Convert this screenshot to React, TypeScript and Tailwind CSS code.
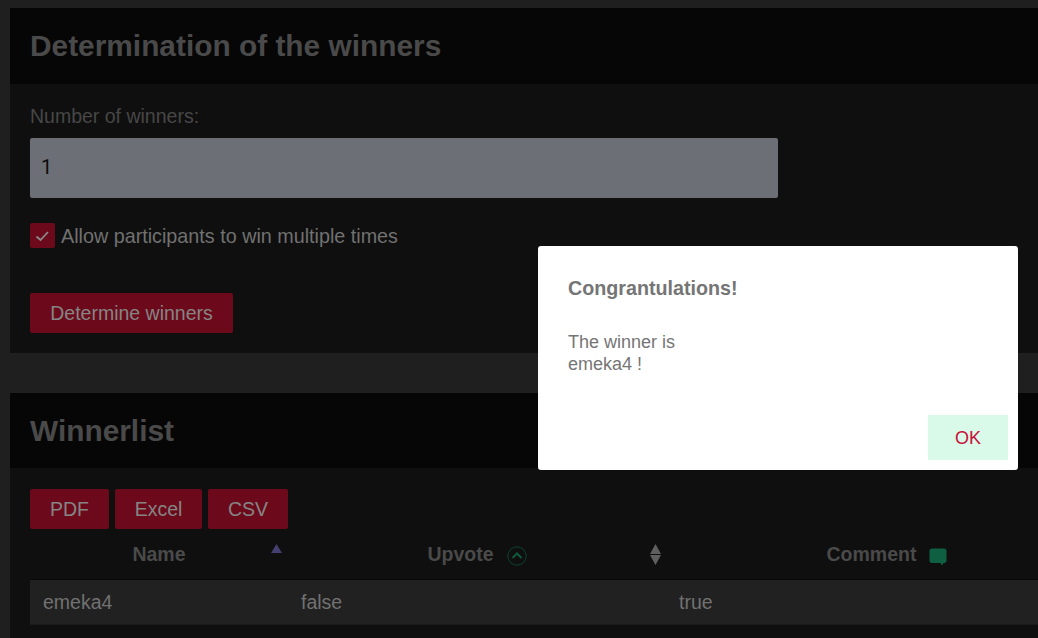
import React from "react";

function SectionHeader({ title, className }: { title: string; className: string }) {
  return (
    <div className={`bg-[#060606] pl-5 flex items-center ${className}`}>
      <h2 className="text-[29.85px] font-bold text-[#4a4a4a] leading-none">{title}</h2>
    </div>
  );
}

function RedButton({ label, className }: { label: string; className: string }) {
  return (
    <button className={`h-10 pt-[1px] bg-[#6c0a1b] text-[#858585] text-[19.5px] rounded-[2px] ${className}`}>
      {label}
    </button>
  );
}

export default function App() {
  return (
    <div
      className="relative w-[1038px] h-[638px] overflow-hidden bg-[#1f1f1f] pl-2.5 pt-2"
      style={{ fontFamily: '"Liberation Sans", Arial, sans-serif' }}
    >
      <section className="w-[1100px]">
        <SectionHeader title="Determination of the winners" className="h-[76px]" />
        <div className="h-[269px] bg-[#0f0f0f] px-5 pt-[19px]">
          <label className="block text-[19.5px] leading-[27px] text-[#474747]">Number of winners:</label>
          <div className="mt-[8px] w-[748px] h-[60px] bg-[#6c6f76] rounded-[2px] flex items-center pl-[11px] pb-[3px] text-[20px] text-[#0c0c0c] font-['Roboto']">
            1
          </div>
          <div className="mt-[25px] h-[25px] flex items-center gap-[6px]">
            <span className="w-[25px] h-[25px] bg-[#6c0a1b] rounded-[2px] flex items-center justify-center">
              <svg width="15" height="12" viewBox="0 0 15 12" fill="none">
                <path d="M1.5 6.5 L5.5 10 L13 2" stroke="#8a8a8a" strokeWidth="1.8" />
              </svg>
            </span>
            <span className="text-[19.75px] leading-[25px] pt-[2px] text-[#717171]">Allow participants to win multiple times</span>
          </div>
          <RedButton label="Determine winners" className="mt-[45px] w-[203px]" />
        </div>
      </section>

      <section className="w-[1100px] mt-10">
        <SectionHeader title="Winnerlist" className="h-[75px]" />
        <div className="h-[200px] bg-[#0f0f0f] px-5 pt-[21px]">
          <div className="flex gap-[6px]">
            <RedButton label="PDF" className="w-[79px]" />
            <RedButton label="Excel" className="w-[87px]" />
            <RedButton label="CSV" className="w-[80px]" />
          </div>
          <div className="w-[1076px]">
            <div className="grid grid-cols-[258px_378px_440px] h-[51px] border-b border-[#080808] text-[19.5px] font-bold text-[#4a4a4a]">
              <div className="relative flex items-center justify-center pt-[1px]">
                Name
                <svg className="absolute right-[6px] top-[15px]" width="11" height="9" viewBox="0 0 11 9">
                  <path d="M5.5 0 L11 9 L0 9 Z" fill="#453f72" />
                </svg>
              </div>
              <div className="relative flex items-center justify-center gap-[13px] pt-[1px]">
                Upvote
                <svg width="20" height="20" viewBox="0 0 20 20" fill="none" className="mt-[3px]">
                  <circle cx="10" cy="10" r="9.2" stroke="#0c4532" strokeWidth="1" />
                  <path d="M5.5 12 L10 7.5 L14.5 12" stroke="#0f5a3f" strokeWidth="2" />
                </svg>
                <svg className="absolute right-[5px] top-[15px]" width="11" height="21" viewBox="0 0 11 21">
                  <path d="M5.5 0 L11 10 L0 10 Z M5.5 21 L11 11 L0 11 Z" fill="#5f5f5f" />
                </svg>
              </div>
              <div className="flex items-center justify-center gap-[13px] pl-[2px] pt-[1px]">
                Comment
                <svg width="18" height="18" viewBox="0 0 18 18" className="mt-[5px]">
                  <path d="M3 0.5 H15 Q17.5 0.5 17.5 3 V13 Q17.5 15 15 15 H14.5 L13 17.5 L11.5 15 H3 Q0.5 15 0.5 13 V3 Q0.5 0.5 3 0.5 Z" fill="#0f5f43" />
                </svg>
              </div>
            </div>
            <div className="grid grid-cols-[258px_378px_440px] h-[45px] pt-[2px] items-center bg-[#212121] border-b border-[#1a1a1a] text-[19.5px] text-[#717171]">
              <div className="pl-[13px]">emeka4</div>
              <div className="pl-[13px]">false</div>
              <div className="pl-[13px]">true</div>
            </div>
          </div>
        </div>
      </section>

      <div className="absolute left-[538px] top-[246px] w-[480px] h-[224px] bg-white rounded-[3px] text-[#757575] pl-[30px] pt-[30px]">
        <h3 className="text-[19.7px] font-bold leading-[24px]">Congrantulations!</h3>
        <p className="mt-[31px] text-[18px] leading-[22px]">
          The winner is
          <br />
          emeka4 !
        </p>
        <button className="absolute right-[10px] bottom-[10px] w-20 h-[45px] pt-[1px] bg-[#d9f9e9] text-[#c8103a] text-[18px]">
          OK
        </button>
      </div>
    </div>
  );
}
